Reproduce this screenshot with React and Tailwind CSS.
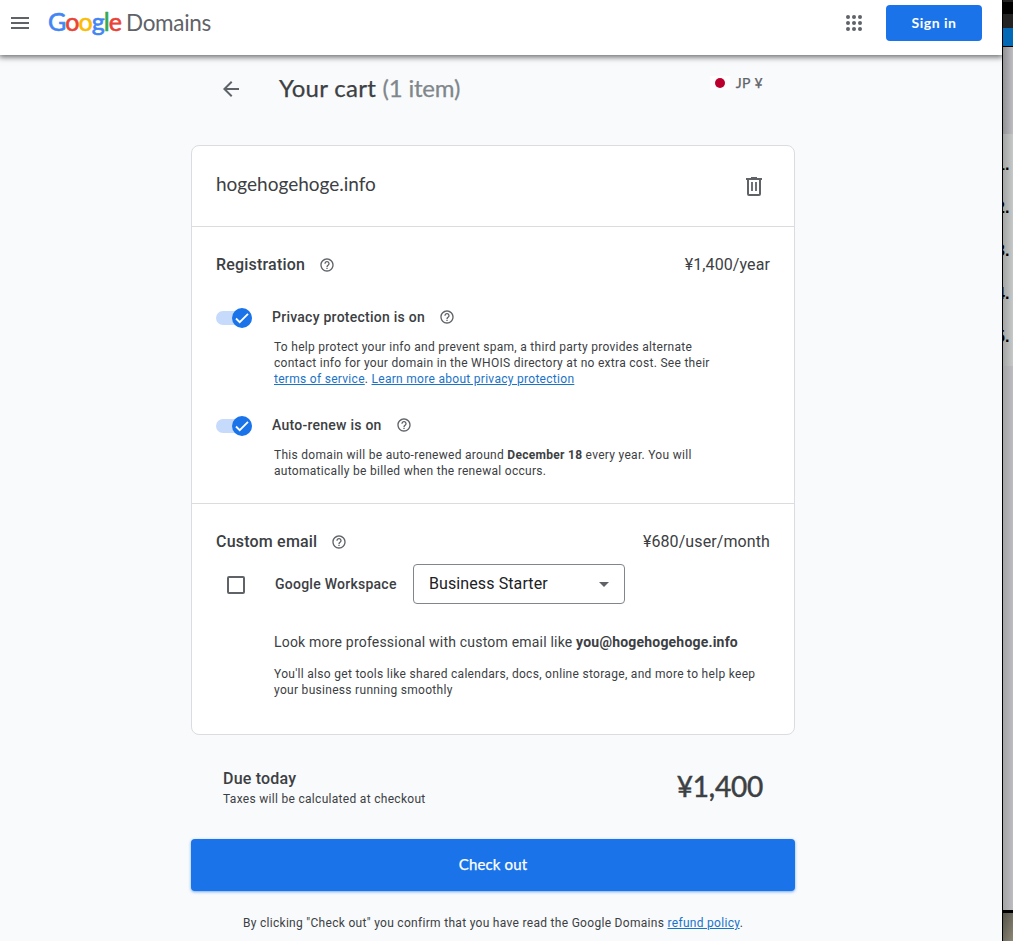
import React from 'react';
import { MdArrowBack, MdArrowDropDown, MdHelpOutline, MdMenu } from 'react-icons/md';

const display = 'font-[Lato,sans-serif] [-webkit-text-stroke:0.25px_currentColor]';

function Logo() {
  return (
    <div className="ml-4 flex items-baseline font-[Lato,sans-serif] leading-8">
      <span className="w-[78px] text-[25px] tracking-[-0.9px] whitespace-nowrap [-webkit-text-stroke:0.6px_currentColor]">
        <span className="text-[#4285f4]">G</span>
        <span className="text-[#ea4335]">o</span>
        <span className="text-[#fbbc04]">o</span>
        <span className="text-[#4285f4]">g</span>
        <span className="text-[#34a853]">l</span>
        <span className="text-[#ea4335]">e</span>
      </span>
      <span className="text-[22.5px] tracking-[-0.3px] text-[#5f6368]">Domains</span>
    </div>
  );
}

function AppsIcon() {
  return (
    <svg viewBox="0 0 24 24" className="ml-auto mt-[11px] size-6" fill="#5f6368">
      {[6, 12, 18].map((y) => [6, 12, 18].map((x) => <circle key={`${x}-${y}`} cx={x} cy={y} r="2" />))}
    </svg>
  );
}

function Header() {
  return (
    <header className="relative flex h-[55px] items-start bg-white pl-2 pr-5 shadow-[0_1px_6px_1px_rgba(0,0,0,0.6)]">
      <MdMenu className="mt-[11px] size-6 text-[#5f6368]" />
      <div className="mt-[5px]">
        <Logo />
      </div>
      <AppsIcon />
      <button className="ml-5 mt-[5px] h-9 w-24 rounded bg-[#1a73e8] pb-0.5 font-[Lato,sans-serif] text-[14px] font-bold tracking-[0.5px] text-white">
        Sign in
      </button>
    </header>
  );
}

function TrashIcon() {
  return (
    <svg viewBox="0 0 16 19" className="mt-px h-[19px] w-4" fill="none" stroke="#5f6368">
      <path d="M0 2h16M5 1h6" strokeWidth="2" />
      <path d="M2 2v15q0 1 1 1h10q1 0 1-1V2" strokeWidth="2" />
      <path d="M6 5v9M10 5v9" strokeWidth="1.8" />
    </svg>
  );
}

function Toggle() {
  return (
    <div className="flex h-5 w-9 items-center">
      <div className="flex h-3.5 w-full items-center justify-end rounded-full bg-[#c6dafb]">
        <svg viewBox="0 0 20 20" className="size-5 shrink-0">
          <circle cx="10" cy="10" r="10" fill="#1a73e8" />
          <path d="M4 10.5l3.7 3.7L16 5.8" fill="none" stroke="#fff" strokeWidth="1.8" />
        </svg>
      </div>
    </div>
  );
}

function Help() {
  return <MdHelpOutline className="size-4 text-[#5f6368]" />;
}

function SectionHeading({ title, price }) {
  return (
    <div className="flex h-6 items-center justify-between text-[16px]">
      <div className="flex items-center gap-[13.5px]">
        <h2 className="font-medium tracking-[0.2px]">{title}</h2>
        <Help />
      </div>
      <span className="tracking-[0.1px]">{price}</span>
    </div>
  );
}

function Option({ title, children }) {
  return (
    <div className="flex gap-5">
      <div className="mt-px">
        <Toggle />
      </div>
      <div>
        <div className="flex h-5 items-center gap-3.5">
          <h3 className="text-[14px] font-medium tracking-[0.25px]">{title}</h3>
          <Help />
        </div>
        <p className="ml-0.5 mt-3 text-[12px] leading-4 tracking-[0.29px] whitespace-nowrap">{children}</p>
      </div>
    </div>
  );
}

function Link({ children }) {
  return <a className="text-[#1a73c8] underline">{children}</a>;
}

function Cart() {
  return (
    <div className="mt-14 h-[590px] rounded-lg border border-[#dadce0] bg-white">
      <div className="flex h-[81px] items-center justify-between border-b border-[#dadce0] pl-6 pr-8">
        <h2 className="pb-[3px] font-[Lato,sans-serif] text-[19px]">hogehogehoge.info</h2>
        <TrashIcon />
      </div>

      <div className="h-[277px] border-b border-[#dadce0] px-6 pt-[26px]">
        <SectionHeading title="Registration" price="¥1,400/year" />
        <div className="mt-[30px]">
          <Option title="Privacy protection is on">
            To help protect your info and prevent spam, a third party provides alternate
            <br />
            contact info for your domain in the WHOIS directory at no extra cost. See their
            <br />
            <Link>terms of service</Link>. <Link>Learn more about privacy protection</Link>
          </Option>
        </div>
        <div className="mt-7">
          <Option title="Auto-renew is on">
            This domain will be auto-renewed around <b>December 18</b> every year. You will
            <br />
            automatically be billed when the renewal occurs.
          </Option>
        </div>
      </div>

      <div className="px-6 pt-[26px]">
        <SectionHeading title="Custom email" price="¥680/user/month" />
        <div className="mt-2.5 flex items-center">
          <div className="ml-[11px] mt-0.5 size-[18px] rounded-xs border-2 border-[#5f6368]" />
          <span className="ml-[30px] w-[138px] text-[14px] font-medium tracking-[0.25px]">Google Workspace</span>
          <div className="flex h-10 w-[212px] items-center justify-between rounded border border-[#80868b] pl-[15px] pr-2 text-[16px] tracking-[0.1px] text-[#202124]">
            Business Starter
            <MdArrowDropDown className="size-6 text-[#5f6368]" />
          </div>
        </div>
        <div className="ml-[58px] mt-7 whitespace-nowrap">
          <p className="text-[14px] leading-5 tracking-[0.2px]">
            Look more professional with custom email like <b>you@hogehogehoge.info</b>
          </p>
          <p className="mt-3.5 text-[12px] leading-4 tracking-[0.3px]">
            You'll also get tools like shared calendars, docs, online storage, and more to help keep
            <br />
            your business running smoothly
          </p>
        </div>
      </div>
    </div>
  );
}

// sliver of the windows lying behind the browser
function Backdrop() {
  return (
    <aside className="flex h-full w-[11px] flex-col overflow-hidden border-l border-black bg-[#111] font-['Liberation_Sans',sans-serif]">
      <div className="h-0.5 bg-[#222]" />
      <div className="h-3 bg-black" />
      <div className="h-3.5 bg-[#222]" />
      <div className="h-[18px] bg-[#0368b5]" />
      <div className="h-px bg-black" />
      <div className="h-[87px] bg-linear-to-r from-[#929295] to-[#bdbdc2]" />
      <ol className="flex h-[232px] flex-col items-start bg-linear-to-r from-[#a4a5a5] to-[#c7c8c8] pt-5 text-[16px] font-bold text-black">
        {[1, 2, 3, 4, 5].map((n) => (
          <li key={n} className="-ml-[7px] h-[43px] shrink-0 leading-[22px]">
            {n}.
          </li>
        ))}
      </ol>
      <div className="h-[544px] bg-linear-to-r from-[#a3a4a5] to-[#bdbcc2]" />
      <div className="h-[3px] bg-black" />
      <div className="flex-1 bg-linear-to-br from-[#55534a] to-[#8d8776]" />
    </aside>
  );
}

export default function App() {
  return (
    <div className="flex h-[941px] w-[1013px] overflow-hidden bg-[#f8fafc] font-[Roboto,sans-serif] text-[#3c4043]">
      <div className="w-[1002px] overflow-hidden">
        <Header />
        <main className="ml-[191px] w-[604px]">
          <div className="mt-4 mb-[-16px] flex h-[34px] items-start pl-7">
            <MdArrowBack className="mt-1.5 size-6 text-[#5f6368]" />
            <h1 className={`${display} ml-9 text-[24px] leading-[34px] tracking-[0.3px] text-[#3c4043]`}>
              Your cart <span className="tracking-[-0.2px] text-[#80868b]">(1 item)</span>
            </h1>
            <div className={`${display} ml-auto mr-8 mt-1 flex items-center text-[14px] leading-4 tracking-[0.4px] text-[#5f6368]`}>
              <span className="mr-1.5 flex h-3.5 w-5 items-center justify-center bg-white">
                <span className="size-2.5 rounded-full bg-[#bc002d]" />
              </span>
              JP ¥
            </div>
          </div>
          <Cart />

          <div className="mt-8 flex h-10 items-center justify-between px-8">
            <div>
              <h2 className="text-[16px] font-medium leading-6 tracking-[0.2px]">Due today</h2>
              <p className="text-[12px] leading-4 tracking-[0.3px]">Taxes will be calculated at checkout</p>
            </div>
            <span className="pb-0.5 font-[Lato,sans-serif] text-[28px] tracking-[-0.2px] [-webkit-text-stroke:0.5px_currentColor]">
              ¥1,400
            </span>
          </div>
          <button className={`${display} mt-8 h-[52px] w-full rounded bg-[#1a73e8] pb-0.5 text-[15px] tracking-[0.15px] text-white shadow-[0_1px_3px_rgba(26,115,232,0.6)]`}>
            Check out
          </button>
          <p className="mt-6 text-center text-[12px] leading-4 tracking-[0.3px]">
            By clicking "Check out" you confirm that you have read the Google Domains <Link>refund policy</Link>.
          </p>
        </main>
      </div>
      <Backdrop />
    </div>
  );
}
